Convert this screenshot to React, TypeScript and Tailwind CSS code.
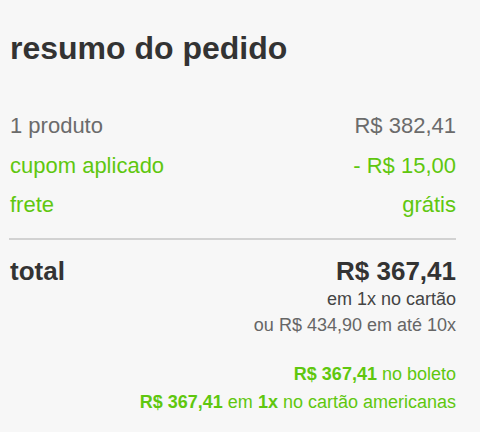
import React from 'react';

const rows = [
    { label: '1 produto', value: 'R$ 382,41', green: false },
    { label: 'cupom aplicado', value: '- R$ 15,00', green: true },
    { label: 'frete', value: 'grátis', green: true },
];

export default function App() {
    return (
        <div className="w-[500px] h-[432px] bg-white font-['Liberation_Sans',Arial,sans-serif]">
            <div className="w-[480px] h-full bg-[#f7f7f7] pl-[10px] pr-[24px] pt-[28px]">
                {/* Header */}
                <h2 className="text-[32px] leading-[40px] font-bold text-[#333]">resumo do pedido</h2>

                {/* Summary rows */}
                <div className="mt-[38px]">
                    {rows.map((r) => (
                        <div
                            key={r.label}
                            className={`flex justify-between text-[22px] leading-[39.5px] ${r.green ? 'text-[#5fc70f]' : 'text-[#6b6b6b]'}`}
                        >
                            <span>{r.label}</span>
                            <span>{r.value}</span>
                        </div>
                    ))}
                </div>

                <div className="mt-[13px] -ml-px h-[2px] bg-[#d2d2d2]" />

                {/* Total */}
                <div className="mt-[16px] flex justify-between text-[26px] leading-[30px] font-bold text-[#333]">
                    <span>total</span>
                    <span>R$ 367,41</span>
                </div>
                <div className="text-right text-[18px] leading-[26px]">
                    <p className="text-[#444]">em 1x no cartão</p>
                    <p className="text-[#666]">ou R$ 434,90 em até 10x</p>
                </div>

                <div className="mt-[22px] text-right text-[18px] leading-[28.5px] text-[#5fc70f]">
                    <p>
                        <b>R$ 367,41</b> no boleto
                    </p>
                    <p>
                        <b>R$ 367,41</b> em <b>1x</b> no cartão americanas
                    </p>
                </div>
            </div>
        </div>
    );
}
